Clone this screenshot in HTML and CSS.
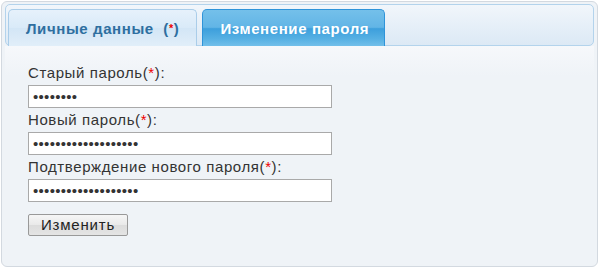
FILE: index.html
```html
<!DOCTYPE html>
<html lang="ru">
<head>
    <meta charset="UTF-8">
    <title>Изменение пароля</title>
    <link rel="stylesheet" href="styles.css">
</head>
<body>
    <div class="panel">
        <ul class="tabs">
            <li class="tab">Личные данные &nbsp;(<span class="req">*</span>)</li>
            <li class="tab active">Изменение пароля</li>
        </ul>

        <form class="form">
            <label for="oldPass">Старый пароль(<span class="req">*</span>):</label>
            <input type="password" id="oldPass" value="12345678">

            <label for="newPass">Новый пароль(<span class="req">*</span>):</label>
            <input type="password" id="newPass" value="1234567890123456789">

            <label for="confirmPass">Подтверждение нового пароля(<span class="req">*</span>):</label>
            <input type="password" id="confirmPass" value="1234567890123456789">

            <button type="button" class="btn">Изменить</button>
        </form>
    </div>
</body>
</html>
```

FILE: styles.css
```css
* {
    box-sizing: border-box;
    font-family: 'Liberation Sans', Arial, sans-serif;
}

body {
    margin: 0;
    background: #fff;
}

.panel {
    margin: 1px;
    width: 597px;
    height: 266px;
    border: 1px solid #d3d9e0;
    border-radius: 6px;
    background: #eff3f7;
    padding: 2px 3px;
}

.tabs {
    list-style: none;
    margin: 0;
    padding: 4px 2px 0;
    height: 42px;
    display: flex;
    align-items: flex-end;
    gap: 5px;
    border: 1px solid #b3d3ec;
    border-radius: 5px;
    background: linear-gradient(#f1f6fb, #dce9f5);
}

.tab {
    height: 37px;
    margin-bottom: -1px;
    padding: 0 17px;
    display: flex;
    align-items: center;
    font-size: 15px;
    letter-spacing: 0.6px;
    font-weight: bold;
    color: #2e6fa0;
    border: 1px solid #aacde9;
    border-bottom: none;
    border-radius: 5px 5px 0 0;
    background: linear-gradient(#e6f1fb, #d9eaf8 50%, #d3e6f6 51%, #e1eef9 100%);
}

.tab .req {
    color: #e00;
    font-size: 11px;
    vertical-align: 2px;
}

.tab.active {
    color: #fff;
    padding: 0 15px 0 17px;
    border-color: #2f94d9;
    background: linear-gradient(#74c0ea, #62b5e6 48%, #3d9fdc 52%, #56b0e3 80%, #72bfea 100%);
}

.form {
    padding: 15px 23px 0;
    background: linear-gradient(#f6f8fb, #eff3f7 30px);
}

.form label {
    display: block;
    font-size: 15px;
    letter-spacing: 0.6px;
    line-height: 16px;
    padding: 4px 0;
    color: #333;
}

.form .req {
    color: #e00;
}

.form input {
    display: block;
    width: 304px;
    height: 23px;
    margin: 0;
    padding: 0 4px;
    border: 1px solid #a9a9a9;
    background: #fff;
    font-size: 15px;
    color: #333;
    letter-spacing: 0.3px;
}

.btn {
    display: block;
    margin-top: 12px;
    width: 100px;
    height: 22px;
    padding: 0 0 1px;
    font-size: 15px;
    letter-spacing: 0.8px;
    color: #222;
    border: 1px solid #999;
    border-radius: 2px;
    background: linear-gradient(#f6f6f6, #e9e9e9 50%, #dcdcdc 51%, #e4e4e4);
}
```
